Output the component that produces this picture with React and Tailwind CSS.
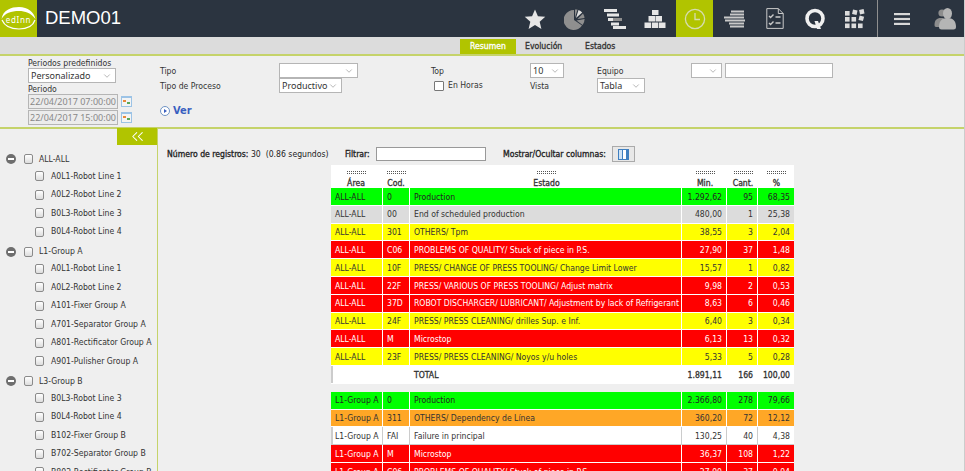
import { ChevronDown, ChevronsLeft } from "lucide-react";

const rows = [
  ["g", "ALL-ALL", "0", "Production", "1.292,62", "95", "68,35"],
  ["s", "ALL-ALL", "00", "End of scheduled production", "480,00", "1", "25,38"],
  ["y", "ALL-ALL", "301", "OTHERS/ Tpm", "38,55", "3", "2,04"],
  ["r", "ALL-ALL", "C06", "PROBLEMS OF QUALITY/ Stuck of piece in P.S.", "27,90", "37", "1,48"],
  ["y", "ALL-ALL", "10F", "PRESS/ CHANGE OF PRESS TOOLING/ Change Limit Lower", "15,57", "1", "0,82"],
  ["r", "ALL-ALL", "22F", "PRESS/ VARIOUS OF PRESS TOOLING/ Adjust matrix", "9,98", "2", "0,53"],
  ["r", "ALL-ALL", "37D", "ROBOT DISCHARGER/ LUBRICANT/ Adjustment by lack of Refrigerant", "8,63", "6", "0,46"],
  ["y", "ALL-ALL", "24F", "PRESS/ PRESS CLEANING/ drilles Sup. e Inf.", "6,40", "3", "0,34"],
  ["r", "ALL-ALL", "M", "Microstop", "6,13", "13", "0,32"],
  ["y", "ALL-ALL", "23F", "PRESS/ PRESS CLEANING/ Noyos y/u holes", "5,33", "5", "0,28"],
];

const rows2 = [
  ["g", "L1-Group A", "0", "Production", "2.366,80", "278", "79,66"],
  ["o", "L1-Group A", "311", "OTHERS/ Dependency de Línea", "360,20", "72", "12,12"],
  ["w", "L1-Group A", "FAI", "Failure in principal", "130,25", "40", "4,38"],
  ["r", "L1-Group A", "M", "Microstop", "36,37", "108", "1,22"],
  ["r", "L1-Group A", "C06", "PROBLEMS OF QUALITY/ Stuck of piece in P.S.", "27,90", "37", "0,94"],
];

const rowColors = {
  g: "bg-[#00ff00] text-[#222]",
  s: "bg-[#dcdcdc] text-[#333]",
  y: "bg-[#ffff00] text-[#333]",
  r: "bg-[#ff0000] text-white",
  o: "bg-[#ffa726] text-[#333]",
  w: "bg-white text-[#333]",
};

const tree = [
  ["ALL-ALL", ["A0L1-Robot Line 1", "A0L2-Robot Line 2", "B0L3-Robot Line 3", "B0L4-Robot Line 4"]],
  ["L1-Group A", ["A0L1-Robot Line 1", "A0L2-Robot Line 2", "A101-Fixer Group A", "A701-Separator Group A", "A801-Rectificator Group A", "A901-Pulisher Group A"]],
  ["L3-Group B", ["B0L3-Robot Line 3", "B0L4-Robot Line 4", "B102-Fixer Group B", "B702-Separator Group B", "B802-Rectificator Group B"]],
];

// the screenshot's bold keeps the regular letter widths, so it is a stroke and not font-bold
const heavy = "[-webkit-text-stroke:0.3px_currentColor]";

const Cell = ({ className, children }) => (
  <div className={`flex h-full items-center overflow-hidden whitespace-nowrap px-[4px] pt-px ${className}`}>{children}</div>
);

const Row = ({ c, area, cod, estado, min, cant, pct, bold }) => {
  const line = c === "w" && !bold ? "border-[#ccc]" : "border-white";
  return (
    <div className={`flex h-[17.8px] gap-px border-b ${line} ${rowColors[c]} ${bold ? heavy : ""}`}>
      <Cell className={`w-[50px] ${c === "w" ? "border-l-2 border-[#ccc] pl-[2px]" : ""}`}>{area}</Cell>
      <Cell className={`w-[28px] border-x ${line}`}>{cod}</Cell>
      <Cell className={`w-[271px] border-r ${line} pl-[3px]`}>{estado}</Cell>
      <Cell className={`w-[44px] justify-end border-r ${line}`}>{min}</Cell>
      <Cell className={`w-[30px] justify-end border-r ${line}`}>{cant}</Cell>
      <Cell className="w-[35px] justify-end">{pct}</Cell>
    </div>
  );
};

const Grip = () => (
  <svg width="19" height="4" viewBox="0 0 19 4" className="mx-auto block">
    <path d="M0 .5H19M0 2.500H19" stroke="#555" strokeDasharray="1 1" />
  </svg>
);

const Head = ({ className, children }) => (
  <div className={`flex flex-col items-center pt-[6px] ${className}`}>
    <Grip />
    <span className="mt-[3px] leading-[10px]">{children}</span>
  </div>
);

const Check = ({ className }) => (
  <span className={`block h-[10px] w-[9px] rounded-[2px] border border-[#8a8a8a] bg-gradient-to-b from-white to-[#ddd] ${className}`} />
);

const Select = ({ className, children }) => (
  <div className={`flex h-[15px] items-center justify-between border border-[#b5b5b5] bg-white pl-[2px] pr-[3px] font-['Noto_Sans',sans-serif] text-[9px] text-[#333] ${className}`}>
    <span className="whitespace-nowrap">{children}</span>
    <ChevronDown size={10} strokeWidth={1} className="shrink-0 text-[#555]" />
  </div>
);

const CalIcon = () => (
  <svg width="11" height="11" viewBox="0 0 11 11" className="ml-[3px]">
    <rect width="11" height="11" fill="#9cc3e6" />
    <rect x="1" y="2" width="9" height="8" fill="#f4f4f4" />
    <rect x="2" y="4" width="3" height="2" fill="#e8893a" />
    <rect x="6" y="6" width="3" height="2" fill="#5aa85a" />
  </svg>
);

const DateInput = ({ className, children }) => (
  <div className={`flex items-center ${className}`}>
    <div className="flex h-[15px] w-[90px] items-center whitespace-nowrap border border-[#b5b5b5] bg-[#ececec] pl-[1px] font-['Noto_Sans',sans-serif] text-[9px] text-[#888]">{children}</div>
    <CalIcon />
  </div>
);

const Logo = () => (
  <svg width="37" height="37" viewBox="0 0 37 37">
    <path d="M1.500 19 C3 10 11 7 19 7 C28 7 34 12 35.500 19 C31 13 25 11 19 11 C11 11 5 13 1.500 19Z" fill="#fff" />
    <path d="M2 20 C5 27 12 29 19 29 C27 29 33 26 35 20" fill="none" stroke="#fff" strokeWidth="1.2" />
    <text x="18.5" y="23" textAnchor="middle" fontSize="8" fontFamily="'Noto Sans',sans-serif" fill="#fff" letterSpacing="0.7">edInn</text>
  </svg>
);

const NavIcon = ({ active, children }) => (
  <div className={`flex h-[37px] w-[37px] items-center justify-center ${active ? "bg-[#b1c400]" : ""}`}>{children}</div>
);

const StarIcon = () => (
  <svg width="22" height="22" viewBox="0 0 24 24" fill="#e6e6e6">
    <path d="M12 1.500l3.200 7.400 8 .7-6.100 5.300 1.900 7.900-7-4.200-7 4.200 1.900-7.900L.8 9.600l8-.7z" />
  </svg>
);

const PieIcon = () => (
  <svg width="22" height="22" viewBox="0 0 22 22">
    <path d="M10 2v10l8 5.500A10 10 0 1 1 10 2z" fill="#8f8f8f" />
    <path d="M11 1.500l2.500 0-2.500 8z" fill="#8f8f8f" />
    <path d="M14.500 2a10 10 0 0 1 3.700 2.600L12 10z" fill="#e0e0e0" />
    <path d="M19 5.500a10 10 0 0 1 1.500 4.500l-7 1z" fill="#8f8f8f" />
    <path d="M20.600 11a10 10 0 0 1-2 6L12.500 12.500z" fill="#8f8f8f" />
  </svg>
);

const BarsIcon = () => (
  <svg width="22" height="20" viewBox="0 0 22 20">
    <rect x="0" y="0" width="13" height="3" fill="#e6e6e6" />
    <rect x="3" y="4.500" width="12" height="3" fill="#e6e6e6" />
    <rect x="4" y="9" width="5" height="3" fill="#e6e6e6" />
    <rect x="9" y="9" width="9" height="3" fill="#8f8f8f" />
    <rect x="7" y="13.500" width="8" height="3" fill="#e6e6e6" />
    <rect x="9" y="17" width="13" height="3" fill="#e6e6e6" />
  </svg>
);

const BlocksIcon = () => (
  <svg width="22" height="20" viewBox="0 0 22 20" fill="#e6e6e6">
    <rect x="8" y="1" width="6.500" height="5" />
    <rect x="4.500" y="7" width="6.500" height="5.500" />
    <rect x="11.500" y="7" width="6.500" height="5.500" />
    <rect x="0.500" y="13.500" width="6.500" height="5.500" />
    <rect x="7.800" y="13.500" width="6.500" height="5.500" />
    <rect x="15" y="13.500" width="6.500" height="5.500" />
  </svg>
);

const ClockIcon = () => (
  <svg width="22" height="22" viewBox="0 0 22 22" fill="none" stroke="#d6dcb0" strokeWidth="1.300">
    <circle cx="11" cy="11" r="9.600" />
    <path d="M11 5v6.500h5" />
  </svg>
);

const StackIcon = () => (
  <svg width="21" height="18" viewBox="0 0 21 18" fill="#c9c9c9">
    <rect x="7" y="0.500" width="13" height="2" />
    <rect x="6" y="3.500" width="14" height="2" />
    <rect x="0" y="6.500" width="20" height="2" />
    <rect x="1" y="9.500" width="20" height="2" />
    <rect x="5" y="12.500" width="15" height="2" />
    <rect x="6" y="15.500" width="14" height="2" />
  </svg>
);

const ListIcon = () => (
  <svg width="18" height="21" viewBox="0 0 18 21" fill="none" stroke="#c9c9c9" strokeWidth="1">
    <path d="M0.800 0.600h11.500l4.900 4.900v14.900H0.800z" />
    <path d="M12.300 0.600v4.900h4.900" />
    <path d="M3 8l1.600 1.600L7.500 6.600M3 15l1.600 1.600 2.900-3" strokeWidth="1.400" />
    <path d="M9.500 9h5M9.500 15h5" strokeWidth="1.400" />
  </svg>
);

const QIcon = () => (
  <svg width="22" height="22" viewBox="0 0 22 22" fill="none">
    <circle cx="11" cy="10.500" r="8" stroke="#f0f0f0" strokeWidth="3.600" />
    <path d="M10.500 13l2.500 8h4l-3-8z" fill="#f0f0f0" />
  </svg>
);

const GridIcon = () => (
  <svg width="20" height="20" viewBox="0 0 20 20" fill="#dcdcdc">
    <rect x="0" y="2" width="4.600" height="4.600" />
    <rect x="7.500" y="1" width="4.600" height="4.600" transform="rotate(12 9.800 3.300)" />
    <rect x="14.500" y="0.500" width="4.600" height="4.600" transform="rotate(-12 16.800 2.800)" />
    <rect x="0" y="8" width="4.600" height="4.600" />
    <rect x="6.500" y="8" width="4.600" height="4.600" />
    <rect x="14" y="7" width="4.600" height="4.600" transform="rotate(15 16.300 9.300)" />
    <rect x="0" y="14.500" width="4.600" height="4.600" />
    <rect x="6.500" y="14.500" width="4.600" height="4.600" />
    <rect x="13" y="14.500" width="4.600" height="4.600" />
  </svg>
);

const MenuIcon = () => (
  <svg width="16" height="12" viewBox="0 0 16 12" fill="#d8d8d8">
    <rect width="16" height="2.200" />
    <rect y="4.900" width="16" height="2.200" />
    <rect y="9.800" width="16" height="2.200" />
  </svg>
);

const UsersIcon = () => (
  <svg width="22" height="23" viewBox="0 0 22 23" fill="#b5b5b5">
    <circle cx="8" cy="6" r="3.600" fill="#8d8d8d" />
    <path d="M0.500 18c0-5 2.500-7 6-7h3v9H2c-1 0-1.500-.8-1.500-2z" fill="#8d8d8d" />
    <ellipse cx="13.500" cy="6.500" rx="4.500" ry="5.500" />
    <path d="M5 20c0-6 3-9 8.500-9S22 14 22 20c0 1.700-1 2.500-2.500 2.500h-12C6 22.500 5 21.700 5 20z" />
  </svg>
);

const Header = () => (
  <header className="flex h-[37px] items-stretch bg-[#2b3440]">
    <div className="w-[37px] bg-[#b1c400]">
      <Logo />
    </div>
    <h1 className="ml-[8px] self-center font-['Liberation_Sans',sans-serif] text-[18.5px] leading-none text-white">DEMO01</h1>
    <div className="ml-auto flex items-center gap-[3px]">
      <NavIcon><StarIcon /></NavIcon>
      <NavIcon><PieIcon /></NavIcon>
      <NavIcon><BarsIcon /></NavIcon>
      <NavIcon><BlocksIcon /></NavIcon>
      <NavIcon active><ClockIcon /></NavIcon>
      <NavIcon><StackIcon /></NavIcon>
      <NavIcon><ListIcon /></NavIcon>
      <NavIcon><QIcon /></NavIcon>
      <NavIcon><GridIcon /></NavIcon>
      <div className="ml-[1px] h-[37px] w-px bg-[#8f8f8f]" />
      <div className="flex h-[37px] w-[41px] items-center justify-center"><MenuIcon /></div>
      <div className="flex h-[37px] w-[39px] items-center justify-center"><UsersIcon /></div>
    </div>
  </header>
);

const Tabs = () => (
  <div className={`flex h-[19px] border-b-2 border-[#c5d36a] bg-[#dcdcdc] pl-[460px] text-[#333] ${heavy}`}>
    <div className="mt-[2px] flex w-[56px] items-center justify-center bg-[#b1c400] text-white">Resumen</div>
    <div className="ml-[9px] flex w-[60px] items-center pt-px">Evolución</div>
    <div className="flex items-center pt-px">Estados</div>
  </div>
);

const Filters = () => (
  <section className="flex h-[73px] border-b-2 border-[#c5d36a] bg-[#efefef] pl-[28px] text-[#333]">
    <div className="w-[132px] pt-[2px]">
      <div className="leading-[10px]">Periodos predefinidos</div>
      <Select className="w-[88px]">Personalizado</Select>
      <div className="pt-px leading-[10px]">Periodo</div>
      <DateInput>22/04/2017 07:00:00</DateInput>
      <DateInput className="mt-[1px]">22/04/2017 15:00:00</DateInput>
    </div>
    <div className="pt-[7px]">
      <div className="grid grid-cols-[119px_152px_99px_67px_94px_auto] grid-rows-[15px_15px] items-center">
        <span className="pt-px">Tipo</span>
        <Select className="w-[79px]" />
        <span className="pt-px">Top</span>
        <Select className="w-[34px]">10</Select>
        <span className="pt-px">Equipo</span>
        <div className="flex gap-[3px]">
          <Select className="w-[31px]" />
          <div className="h-[15px] w-[108px] border border-[#b5b5b5] bg-white" />
        </div>
        <span className="pt-px">Tipo de Proceso</span>
        <Select className="w-[63px]">Productivo</Select>
        <span className="flex items-center gap-[4px] pl-[3px]">
          <span className="block h-[10px] w-[10px] rounded-[1px] border border-[#777] bg-white" />
          En Horas
        </span>
        <span className="pt-px">Vista</span>
        <Select className="w-[48px]">Tabla</Select>
      </div>
      <div className="mt-[12px] flex items-center gap-[3px] text-[11px] font-bold text-[#3a5fc0]">
        <span className="flex h-[10px] w-[10px] items-center justify-center rounded-full border border-[#6f93c4] bg-white">
          <span className="ml-px h-0 w-0 border-y-[2.500px] border-l-[3px] border-y-transparent border-l-[#3a5fc0]" />
        </span>
        Ver
      </div>
    </div>
  </section>
);

const TreeGroup = ({ name, items }) => (
  <div className="mb-[2.500px]">
    <div className="flex h-[16px] items-center pl-[6px]">
      <span className="flex h-[10px] w-[10px] items-center justify-center rounded-full bg-[#6e6e6e]">
        <span className="h-[2px] w-[6px] bg-white" />
      </span>
      <Check className="ml-[8px]" />
      <span className="ml-[6px]">{name}</span>
    </div>
    {items.map((item, i) => (
      <div key={i} className="flex h-[18.500px] items-center pl-[35px]">
        <Check />
        <span className="ml-[7px] whitespace-nowrap">{item}</span>
      </div>
    ))}
  </div>
);

const Sidebar = () => (
  <aside className="w-[158px] shrink-0 border-r border-[#c5d36a] text-[#333]">
    <div className="relative ml-auto -mt-px flex h-[17px] w-[40px] items-center justify-center bg-[#b1c400]">
      <ChevronsLeft size={19} strokeWidth={1.300} className="text-white" />
    </div>
    <div className="pt-[6px]">
      {tree.map(([name, items]) => <TreeGroup key={name} name={name} items={items} />)}
    </div>
  </aside>
);

const Toolbar = () => (
  <div className="flex h-[18px] items-center pl-[9px] text-[#222]">
    <span className="w-[178px]"><span className={heavy}>Número de registros:</span> 30 &nbsp;(0.86 segundos)</span>
    <span className={`w-[31px] ${heavy}`}>Filtrar:</span>
    <div className="h-[14px] w-[110px] border border-[#999] bg-white" />
    <span className={`ml-[17px] w-[109px] whitespace-nowrap ${heavy}`}>Mostrar/Ocultar columnas:</span>
    <div className="flex h-[16px] w-[23px] items-center justify-center border border-[#aaa] bg-[#e8e8e8]">
      <svg width="11" height="11" viewBox="0 0 11 11">
        <rect width="11" height="11" fill="#3f7fc0" />
        <rect x="1" y="1" width="3" height="9" fill="#cfe3f5" />
        <rect x="5" y="1" width="3" height="9" fill="#fff" />
      </svg>
    </div>
  </div>
);

const Table = () => (
  <div className="ml-[173px] mt-[2px] w-[463px] text-[#333]">
    <div className={`flex h-[23px] gap-px bg-white text-[#333] ${heavy}`}>
      <Head className="w-[50px]">Área</Head>
      <Head className="w-[28px]">Cod.</Head>
      <Head className="w-[271px]">Estado</Head>
      <Head className="w-[44px]">Min.</Head>
      <Head className="w-[30px]">Cant.</Head>
      <Head className="w-[35px]">%</Head>
    </div>
    {rows.map((r, i) => (
      <Row key={i} c={r[0]} area={r[1]} cod={r[2]} estado={r[3]} min={r[4]} cant={r[5]} pct={r[6]} />
    ))}
    <Row c="w" area="" cod="" estado="TOTAL" min="1.891,11" cant="166" pct="100,00" bold />
    <div className="h-[8px]" />
    {rows2.map((r, i) => (
      <Row key={i} c={r[0]} area={r[1]} cod={r[2]} estado={r[3]} min={r[4]} cant={r[5]} pct={r[6]} />
    ))}
  </div>
);

export default function App() {
  return (
    <div className="flex h-[471px] w-[965px] flex-col overflow-hidden border-r border-[#ccc] bg-[#efefef] font-['DejaVu_Sans_Condensed','DejaVu_Sans',sans-serif] text-[8.6px] leading-none">
      <Header />
      <Tabs />
      <Filters />
      <div className="flex min-h-0 flex-1">
        <Sidebar />
        <main className="min-w-0 flex-1 pt-[16px]">
          <Toolbar />
          <Table />
        </main>
      </div>
    </div>
  );
}
